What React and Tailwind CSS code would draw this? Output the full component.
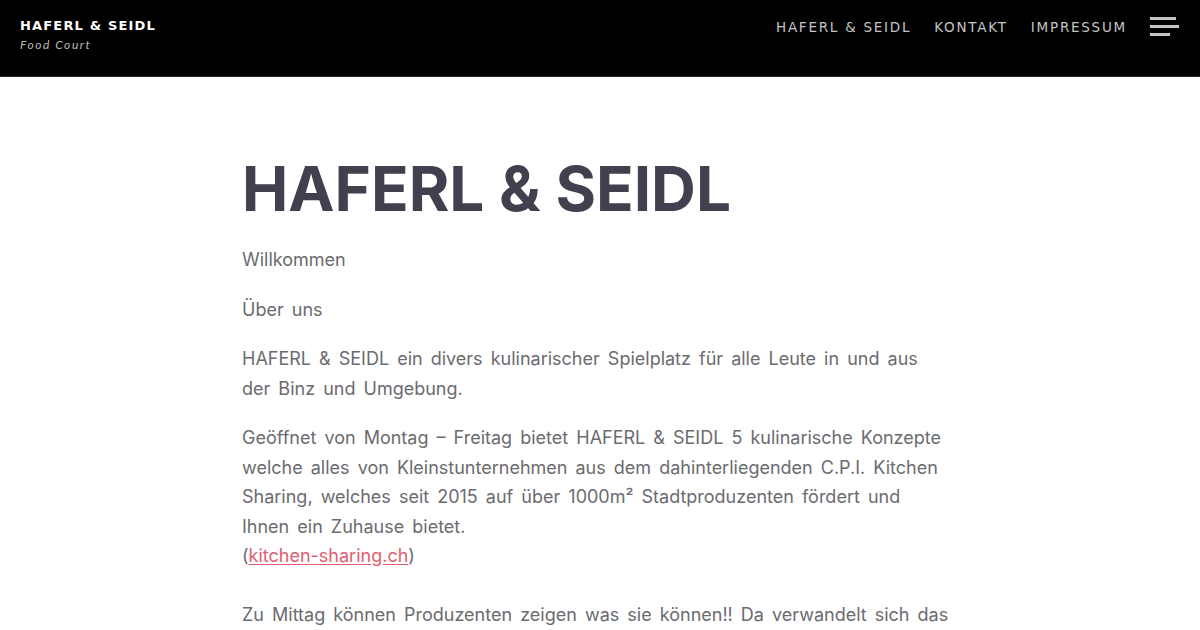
import React from 'react';

const navLinks = ['HAFERL & SEIDL', 'KONTAKT', 'IMPRESSUM'];

function Hamburger() {
    return (
        <button className="flex flex-col gap-[5px] w-[30px] ml-[23px]" aria-label="Menü">
            <span className="block h-[3px] w-[26px] bg-[#c4c4c4]" />
            <span className="block h-[3px] w-[29px] bg-[#c4c4c4]" />
            <span className="block h-[3px] w-[20px] bg-[#c4c4c4]" />
        </button>
    );
}

export default function App() {
    return (
        <div className="min-h-screen bg-white">
            <header className="bg-black h-[77px] border-b border-[#2a2a2a] flex items-start justify-between pl-5 pr-5">
                <div className="pt-[18px]">
                    <div className="text-white text-[13px] font-bold tracking-[0.09em] leading-4 font-['DejaVu_Sans',sans-serif]">
                        HAFERL &amp; SEIDL
                    </div>
                    <div className="text-[#bdbdbd] text-[12px] italic tracking-[0.13em] leading-4 mt-[3px] font-['Lato',sans-serif]">
                        Food Court
                    </div>
                </div>
                <nav className="flex items-center pt-[17px]">
                    {navLinks.map((l) => (
                        <a key={l} href="#" className="text-[#c4c4c4] text-[13.5px] tracking-[0.13em] ml-[23px] leading-4 font-['DejaVu_Sans',sans-serif]">
                            {l}
                        </a>
                    ))}
                    <Hamburger />
                </nav>
            </header>

            <main className="max-w-[716px] mx-auto pt-[72px] pr-[7px] text-[#6b6b70] text-[18px] leading-[29.5px] [word-spacing:3px] font-['Inter',sans-serif]">
                <h1 className="text-[#40404e] text-[62px] font-bold leading-[80px] mb-[16px] [word-spacing:0px] font-['Inter',sans-serif]">
                    HAFERL &amp; SEIDL
                </h1>
                <p className="mb-5">Willkommen</p>
                <p className="mb-5">Über uns</p>
                <p className="mb-5">HAFERL &amp; SEIDL ein divers kulinarischer Spielplatz für alle Leute in und aus der Binz und Umgebung.</p>
                <p className="mb-5">
                    Geöffnet von Montag – Freitag bietet HAFERL &amp; SEIDL 5 kulinarische Konzepte welche alles von Kleinstunternehmen aus dem dahinterliegenden C.P.I. Kitchen Sharing, welches seit 2015 auf über 1000m² Stadtproduzenten fördert und Ihnen ein Zuhause bietet.
                    <br />
                    (<a href="#" className="text-[#e0606f] underline underline-offset-2">kitchen-sharing.ch</a>)
                    <br />
                    <br />
                    Zu Mittag können Produzenten zeigen was sie können!! Da verwandelt sich das Haferl &amp; Seidl in einen Food Court.
                </p>
            </main>
        </div>
    );
}
